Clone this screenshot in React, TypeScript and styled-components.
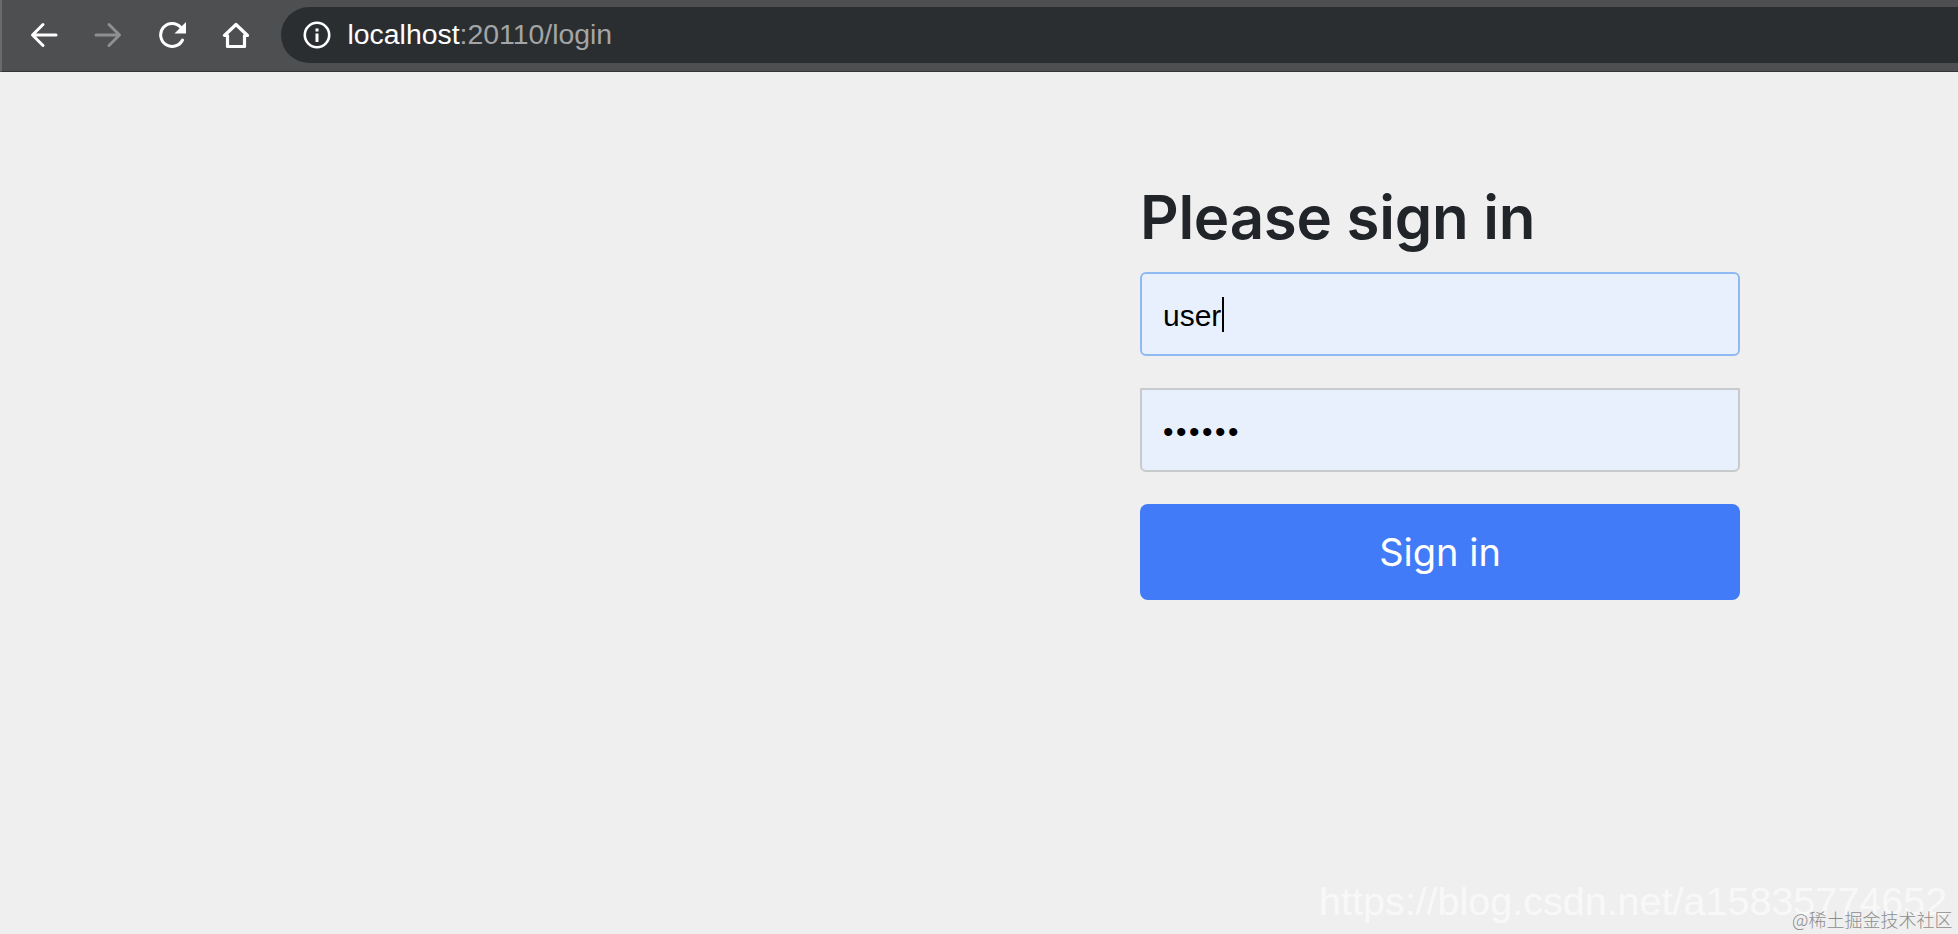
import React from "react";
import styled, { createGlobalStyle } from "styled-components";

const Global = createGlobalStyle`
  html, body { margin: 0; padding: 0; height: 100%; background: #efefef; overflow: hidden; }
  #root { height: 100%; }
`;

const Screen = styled.div`
  position: relative;
  height: 934px;
  display: flex;
  flex-direction: column;
  overflow: hidden;
  font-family: "Liberation Sans", Arial, sans-serif;
`;

const Toolbar = styled.header`
  flex: none;
  height: 72px;
  display: flex;
  align-items: center;
  box-sizing: border-box;
  padding: 0 0 2px 25.5px;
  background: #4e4f50;
  border-left: 2px solid #6a6a6a;
  border-bottom: 1px solid #333435;
`;

const NavButton = styled.button<{ $dim?: boolean }>`
  flex: none;
  width: 32px;
  height: 32px;
  margin-right: 32px;
  padding: 0;
  border: 0;
  background: none;
  color: ${(p) => (p.$dim ? "#8f8f8f" : "#ffffff")};
  display: flex;
  align-items: center;
  justify-content: center;
  svg { display: block; }
`;

const AddressBar = styled.div`
  flex: 1;
  height: 56px;
  margin-left: -3px;
  padding-left: 22px;
  display: flex;
  align-items: center;
  gap: 17px;
  border-radius: 28px 0 0 28px;
  background: #2b2e30;
  color: #ffffff;
  font-size: 28.4px;
`;

const UrlMuted = styled.span`
  color: #a3a5a7;
`;

const Url = styled.div`
  line-height: 32px;
  padding-bottom: 2px;
  white-space: nowrap;
`;

const Main = styled.main`
  flex: 1;
  padding: 109px 0 0 1140px;
`;

const Form = styled.form`
  width: 600px;
  display: flex;
  flex-direction: column;
`;

const Heading = styled.h1`
  margin: 0 0 19px;
  font: 600 60px/72px Inter, "Liberation Sans", sans-serif;
  color: #212529;
  letter-spacing: -0.27px;
`;

const Field = styled.div`
  position: relative;
  margin-bottom: 32px;
`;

const Input = styled.input<{ $focused?: boolean }>`
  display: block;
  width: 100%;
  height: 84px;
  box-sizing: border-box;
  padding: 3px 21px 0;
  outline: 0;
  border: 2px solid ${(p) => (p.$focused ? "#8fb9f3" : "#c8cacb")};
  border-radius: ${(p) => (p.$focused ? "6px" : "1px 1px 6px 6px")};
  background: #e8f0fe;
  color: #000000;
  font: 400 30px "Liberation Sans", Arial, sans-serif;
  letter-spacing: ${(p) => (p.$focused ? "0" : "2.5px")};
`;

const Caret = styled.span`
  position: absolute;
  left: 82px;
  top: 25px;
  width: 1.5px;
  height: 35px;
  background: #000000;
`;

const SubmitButton = styled.button`
  height: 96px;
  border: 0;
  border-radius: 8px;
  background: #427bf8;
  color: #ffffff;
  font: 400 38px Inter, "Liberation Sans", sans-serif;
`;

const UrlMark = styled.div`
  position: absolute;
  left: 1319px;
  top: 878px;
  font-size: 39.5px;
  line-height: 46px;
  color: rgba(255, 255, 255, 0.6);
  white-space: nowrap;
`;

const SiteMark = styled.div`
  position: absolute;
  left: 1792px;
  top: 907px;
  font: 300 18px/24px "Noto Sans CJK SC", sans-serif;
  color: #8d8d8d;
  white-space: nowrap;
`;

const BackIcon = () => (
  <svg width="28" height="26" viewBox="0 0 28 26" fill="none" stroke="currentColor" strokeWidth="3" strokeLinecap="round" strokeLinejoin="round">
    <path d="M26 13H3M13 2.5 2.5 13 13 23.5" />
  </svg>
);

const ForwardIcon = () => (
  <svg width="28" height="26" viewBox="0 0 28 26" fill="none" stroke="currentColor" strokeWidth="3" strokeLinecap="round" strokeLinejoin="round">
    <path d="M2 13h23M15 2.5 25.5 13 15 23.5" />
  </svg>
);

const ReloadIcon = () => (
  <svg width="30" height="27" viewBox="-2 0 30 27" fill="none">
    <path d="M23.5 19a11.5 11.5 0 1 1-1.6-12.5" stroke="currentColor" strokeWidth="3" strokeLinecap="round" />
    <path d="M27 1v11.5H15.5z" fill="currentColor" />
  </svg>
);

const HomeIcon = () => (
  <svg width="28" height="26" viewBox="0 0 28 26" fill="none" stroke="currentColor" strokeWidth="3.2" strokeLinejoin="round">
    <path d="M14 2.5 2.5 13.5H5.5V24.5H22.5V13.5H25.5Z" />
  </svg>
);

const InfoIcon = () => (
  <svg width="28" height="28" viewBox="0 0 28 28" fill="none">
    <circle cx="14" cy="14" r="12.2" stroke="currentColor" strokeWidth="2.6" />
    <rect x="12.5" y="12.5" width="3" height="8.5" fill="currentColor" />
    <rect x="12.5" y="7.5" width="3" height="3" fill="currentColor" />
  </svg>
);

export default function App() {
  return (
    <Screen>
      <Global />
      <Toolbar>
        <NavButton type="button" aria-label="Back"><BackIcon /></NavButton>
        <NavButton type="button" aria-label="Forward" $dim><ForwardIcon /></NavButton>
        <NavButton type="button" aria-label="Reload"><ReloadIcon /></NavButton>
        <NavButton type="button" aria-label="Home"><HomeIcon /></NavButton>
        <AddressBar>
          <InfoIcon />
          <Url>localhost<UrlMuted>:20110/login</UrlMuted></Url>
        </AddressBar>
      </Toolbar>
      <Main>
        <Form onSubmit={(e) => e.preventDefault()}>
          <Heading>Please sign in</Heading>
          <Field>
            <Input $focused type="text" defaultValue="user" aria-label="Username" />
            <Caret />
          </Field>
          <Field>
            <Input type="password" defaultValue="secret" aria-label="Password" />
          </Field>
          <SubmitButton type="submit">Sign in</SubmitButton>
        </Form>
      </Main>
      <UrlMark>https://blog.csdn.net/a15835774652</UrlMark>
      <SiteMark>@稀土掘金技术社区</SiteMark>
    </Screen>
  );
}
